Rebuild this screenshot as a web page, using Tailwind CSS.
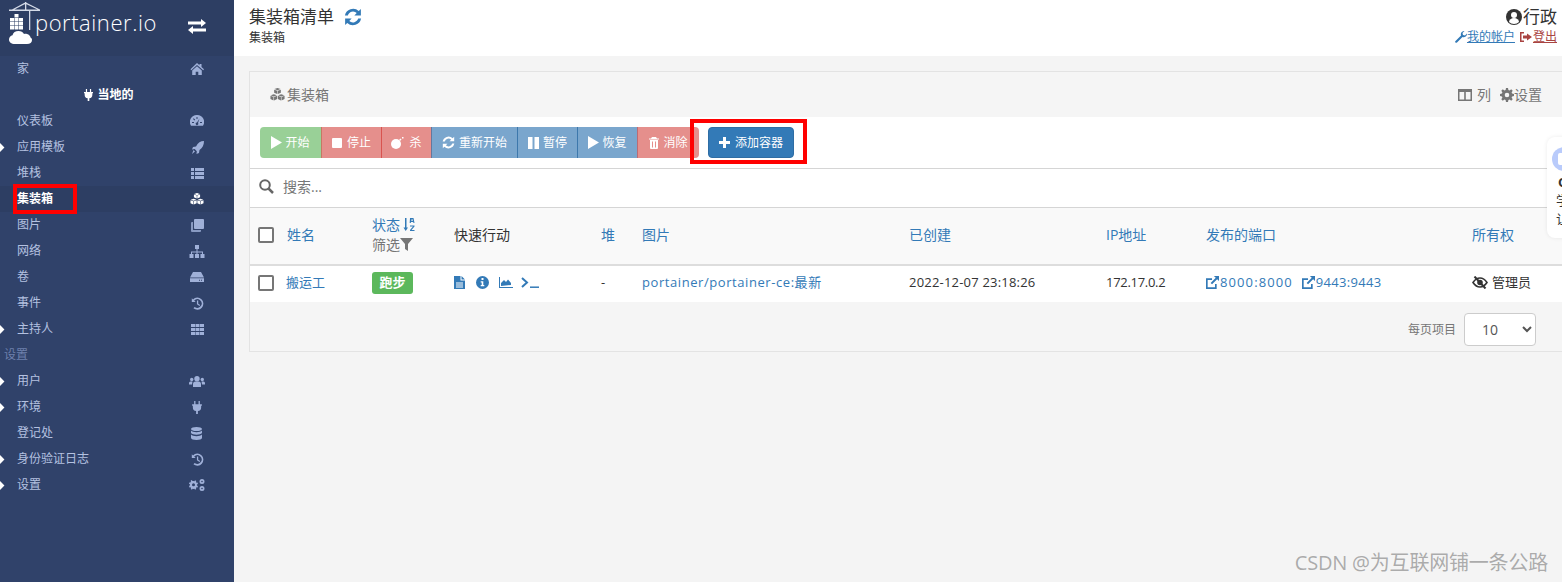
<!DOCTYPE html>
<html lang="zh">
<head>
<meta charset="UTF-8">
<script src="https://cdn.jsdelivr.net/npm/@tailwindcss/browser@4"></script>
<title>portainer.io</title>
</head>
<body class="bg-[#f4f4f4] font-['Open_Sans','Noto_Sans_CJK_SC',sans-serif] text-[13px] text-[#333]">
<svg class="hidden">
  <symbol id="i-cubes" viewBox="0 0 16 14"><path d="M8 0l3.300 1.200L8 2.500 4.700 1.200zM4.400 1.800L7.700 3v3.500L4.400 5.100zM11.600 1.800L8.300 3v3.500L11.600 5.100zM4 6.600l3.300 1.200L4 9.100.7 7.800zM.4 8.400l3.300 1.300v3.700L.4 11.900zM7.600 8.400L4.300 9.700v3.700l3.300-1.500zM12 6.600l3.300 1.200L12 9.100 8.700 7.800zM8.400 8.400l3.300 1.300v3.700l-3.300-1.500zM15.600 8.400l-3.300 1.300v3.700l3.300-1.500z"/></symbol>
  <symbol id="i-refresh" viewBox="0 0 16 16"><path d="M15 .8v5.800H9.200l2.100-2.100A4.800 4.800 0 0 0 3.400 6.700H.8A7.400 7.400 0 0 1 13.100 2.700zM1 15.200V9.400h5.800l-2.100 2.100a4.800 4.800 0 0 0 7.900-2.200h2.600A7.400 7.400 0 0 1 2.900 13.300z"/></symbol>
  <symbol id="i-history" viewBox="0 0 16 16"><path d="M1 1.500v4.700h4.700L3.900 4.400A5.300 5.300 0 1 1 4.500 12.300L3 13.800A7.400 7.400 0 1 0 2.500 3zM7.300 4.300h1.600v3.900l2.400 1.600-.9 1.300-3.100-2.100z"/></symbol>
  <symbol id="i-plug" viewBox="0 0 12 16"><path d="M2.500 0h1.600v4h3.800V0h1.600v4H12v1.700h-.9V8a4.300 4.300 0 0 1-4 4.300V16H4.900v-3.700A4.300 4.300 0 0 1 .9 8V5.700H0V4h2.500z"/></symbol>
  <symbol id="i-play" viewBox="0 0 12 14"><path d="M0 0l12 7-12 7z"/></symbol>
  <symbol id="i-ext" viewBox="0 0 14 14"><path d="M8.500 0H14v5.500l-2-2-5.500 5.500-1.500-1.500L10.500 2zM0 2.500h6.500v1.800H1.800v7.900h7.900V8.500h1.800V14H0z"/></symbol>
</svg>
<div class="flex h-[582px] w-[1562px] overflow-hidden relative">
  <aside class="w-[234px] shrink-0 bg-[#30426a] text-[12px] text-[#b4c1e0]">
    <div class="h-[56px] bg-[#2d3e63] flex items-start relative">
      <svg class="w-[32px] h-[44px] ml-[9px] mt-[2px] shrink-0" viewBox="0 0 32 44" fill="#fff">
        <path d="M0 7.500h31V9H0zM16 0h1.300v8H16zM20 8h1.300v20H20zM17 .5L31 7.500h-2.500L17 2zM16 .5L3 7.500h2.500L16 2z" fill="#d5dbe8"/>
        <path d="M1 16h4v3.500H1zM5.500 16h4v3.500h-4zM10 16h4v3.500h-4zM1 20h4v3.500H1zM5.500 20h4v3.500h-4zM10 20h4v3.500h-4zM1 24h4v3.500H1zM5.500 24h4v3.500h-4zM10 24h4v3.500h-4zM5.500 12h4v3.500h-4z"/>
        <path d="M6 42c-4 0-6-1.800-6-4.500 0-2.300 1.500-3.800 3.500-4.200C4 30.500 6.500 29 9.500 29c2.500 0 4.500 1 5.500 3 1-.4 2-.4 3 0 2 .5 3.500 2 3.500 3.500 1 .6 1.500 1.500 1.500 2.500 0 2.500-2 4-5 4z"/>
      </svg>
      <span class="font-['Open_Sans'] font-light text-[22px] leading-none text-white mt-[11px] -ml-[6px] tracking-[0.55px]">portainer.io</span>
      <svg class="absolute left-[188px] top-[19px] w-[18px] h-[15px]" viewBox="0 0 18 15" fill="#fff"><path d="M0 2.500h13V0l5 4-5 4V5.500H0zM18 9.500H5V7l-5 4 5 4v-2.500h13z"/></svg>
    </div>
    <nav>
      <div class="h-[26px] flex items-center justify-between pl-[17px] pr-[30px]"><span>家</span>
        <svg class="w-[14px] h-[12px]" viewBox="0 0 14 12" fill="#9fb0d8"><path d="M7 0l2.500 2.200V1h2v3l2.500 2.300-.8.900L7 1.900 1.300 7.200l-.8-.9zM7 3.200l4.800 4.300V12H8.300V8.700H5.700V12H2.200V7.500z"/></svg></div>
      <div class="h-[26px] flex items-center justify-center pr-[16px] text-white font-semibold gap-[4px]">
        <svg class="w-[9px] h-[12px]" fill="#fff"><use href="#i-plug"/></svg><span>当地的</span></div>
      <div class="h-[26px] flex items-center justify-between pl-[17px] pr-[30px]"><span>仪表板</span>
        <svg class="w-[14px] h-[13px]" viewBox="0 0 14 13" fill="#9fb0d8"><path d="M7 0a7 7 0 0 1 6 10.800H1A7 7 0 0 1 7 0zM6.500 2v2h1V2zM3 4l1.500 1.500.7-.7L3.700 3.300zM2 7v1h2V7zM10 7v1h2V7zM9.500 3.500L7 7.500a1.300 1.300 0 1 0 1 .5z"/></svg></div>
      <div class="relative h-[26px] flex items-center justify-between pl-[17px] pr-[30px]"><i class="absolute -left-[4px] top-[10px] w-[7px] h-[7px] rotate-45 bg-white"></i><span>应用模板</span>
        <svg class="w-[13px] h-[13px]" viewBox="0 0 13 13" fill="#9fb0d8"><path d="M13 0c0 4-1.500 7-4.500 9l-.5 3-2.500 1 .3-2.800L3.700 8.100 1 8.500 2 6l3-.6C7 1.800 9.500 0 13 0zM2.500 9l1.500 1.500L1 13z"/></svg></div>
      <div class="h-[26px] flex items-center justify-between pl-[17px] pr-[30px]"><span>堆栈</span>
        <svg class="w-[13px] h-[11px]" viewBox="0 0 13 11" fill="#9fb0d8"><path d="M0 0h3v3H0zM4 0h9v3H4zM0 4h3v3H0zM4 4h9v3H4zM0 8h3v3H0zM4 8h9v3H4z"/></svg></div>
      <div class="h-[26px] flex items-center justify-between pl-[17px] pr-[30px] bg-[#2d3e63] text-white font-semibold"><span>集装箱</span>
        <svg class="w-[14px] h-[12px]" fill="#fff"><use href="#i-cubes"/></svg></div>
      <div class="h-[26px] flex items-center justify-between pl-[17px] pr-[30px]"><span>图片</span>
        <svg class="w-[13px] h-[13px]" viewBox="0 0 13 13" fill="#9fb0d8"><path d="M4 0h8a1 1 0 0 1 1 1v8a1 1 0 0 1-1 1H4a1 1 0 0 1-1-1V1a1 1 0 0 1 1-1z"/><path d="M2 3v8h8v1a1 1 0 0 1-1 1H1a1 1 0 0 1-1-1V4a1 1 0 0 1 1-1z" opacity=".8"/></svg></div>
      <div class="h-[26px] flex items-center justify-between pl-[17px] pr-[29px]"><span>网络</span>
        <svg class="w-[16px] h-[13px]" viewBox="0 0 16 13" fill="#9fb0d8"><path d="M6 0h4v4H8.500v2.500H14V9h1.500v4h-4V9H13V7.500H8.500V9H10v4H6V9h1.500V7.500H3V9h1.500v4h-4V9H2V6.500h5.500V4H6z"/></svg></div>
      <div class="h-[26px] flex items-center justify-between pl-[17px] pr-[30px]"><span>卷</span>
        <svg class="w-[14px] h-[10px]" viewBox="0 0 14 10" fill="#9fb0d8"><path d="M3 0h8l3 5.500H0zM0 6.300h14V10H0zM9 7.700v1h1v-1zM11 7.700v1h1v-1z"/></svg></div>
      <div class="h-[26px] flex items-center justify-between pl-[17px] pr-[30px]"><span>事件</span>
        <svg class="w-[13px] h-[13px]" fill="#9fb0d8"><use href="#i-history"/></svg></div>
      <div class="relative h-[26px] flex items-center justify-between pl-[17px] pr-[30px]"><i class="absolute -left-[4px] top-[10px] w-[7px] h-[7px] rotate-45 bg-white"></i><span>主持人</span>
        <svg class="w-[13px] h-[11px]" viewBox="0 0 13 11" fill="#9fb0d8"><path d="M0 0h4v3H0zM4.500 0h4v3h-4zM9 0h4v3H9zM0 4h4v3H0zM4.500 4h4v3h-4zM9 4h4v3H9zM0 8h4v3H0zM4.500 8h4v3h-4zM9 8h4v3H9z"/></svg></div>
      <div class="h-[26px] flex items-center pl-[4px] text-[#6e80ad]">设置</div>
      <div class="relative h-[26px] flex items-center justify-between pl-[17px] pr-[29px]"><i class="absolute -left-[4px] top-[10px] w-[7px] h-[7px] rotate-45 bg-white"></i><span>用户</span>
        <svg class="w-[16px] h-[11px]" viewBox="0 0 16 11" fill="#9fb0d8"><circle cx="8" cy="2.700" r="2.700"/><circle cx="2.700" cy="3.500" r="1.700"/><circle cx="13.300" cy="3.500" r="1.700"/><path d="M4 11V8a2.500 2.500 0 0 1 2.500-2.500h3A2.500 2.500 0 0 1 12 8v3zM0 8.500V7a1.500 1.500 0 0 1 1.500-1.500H3.500L3 8.500zM16 8.500V7a1.500 1.500 0 0 0-1.500-1.500H12.500L13 8.500z"/></svg></div>
      <div class="relative h-[26px] flex items-center justify-between pl-[17px] pr-[32px]"><i class="absolute -left-[4px] top-[10px] w-[7px] h-[7px] rotate-45 bg-white"></i><span>环境</span>
        <svg class="w-[10px] h-[13px]" fill="#9fb0d8"><use href="#i-plug"/></svg></div>
      <div class="h-[26px] flex items-center justify-between pl-[17px] pr-[32px]"><span>登记处</span>
        <svg class="w-[11px] h-[13px]" viewBox="0 0 11 13" fill="#9fb0d8"><ellipse cx="5.500" cy="2" rx="5.500" ry="2"/><path d="M0 3.500c1 1.300 3 1.700 5.500 1.700S10 4.800 11 3.500V6c-1 1.300-3 1.700-5.500 1.700S1 7.300 0 6zM0 7.500c1 1.300 3 1.700 5.500 1.700S10 8.800 11 7.500V11c0 1.200-2.500 2-5.500 2S0 12.200 0 11z"/></svg></div>
      <div class="relative h-[26px] flex items-center justify-between pl-[17px] pr-[30px]"><i class="absolute -left-[4px] top-[10px] w-[7px] h-[7px] rotate-45 bg-white"></i><span>身份验证日志</span>
        <svg class="w-[13px] h-[13px]" fill="#9fb0d8"><use href="#i-history"/></svg></div>
      <div class="relative h-[26px] flex items-center justify-between pl-[17px] pr-[29px]"><i class="absolute -left-[4px] top-[10px] w-[7px] h-[7px] rotate-45 bg-white"></i><span>设置</span>
        <svg class="w-[16px] h-[12px]" viewBox="0 0 16 12" fill="#9fb0d8"><path fill-rule="evenodd" d="M4.500 2l1 .2.500-1 1.300.8-.4 1 .7.800 1-.2.300 1.500-1 .3v1.200l1 .3-.3 1.500-1-.2-.7.800.4 1-1.300.8-.5-1-1 .2-1-.2-.5 1-1.300-.8.400-1-.7-.800-1 .2L0 6.700l1-.3V5.200L0 4.900l.3-1.500 1 .2.700-.8-.4-1L2.900 1l.5 1zM4.500 4.300a1.500 1.500 0 1 0 0 3 1.500 1.500 0 0 0 0-3z"/><path fill-rule="evenodd" d="M13 0a2.500 2.500 0 1 1 0 5 2.500 2.500 0 0 1 0-5zM13 1.700a.8.800 0 1 0 0 1.600.8.800 0 0 0 0-1.600zM13 7a2.500 2.500 0 1 1 0 5 2.500 2.500 0 0 1 0-5zM13 8.700a.8.800 0 1 0 0 1.600.8.800 0 0 0 0-1.600z"/></svg></div>
    </nav>
  </aside>

  <main class="flex-1 min-w-0">
    <header class="h-[56px] bg-white pl-[15px] pr-[5px] flex justify-between">
      <div>
        <div class="flex items-center h-[23px] mt-[5px] text-[17px] text-[#333]">集装箱清单
          <svg class="w-[18px] h-[18px] ml-[10px]" fill="#337ab7"><use href="#i-refresh"/></svg></div>
        <div class="text-[12px] leading-[14px] mt-[3px]">集装箱</div>
      </div>
      <div class="flex flex-col items-end">
        <div class="flex items-center h-[23px] mt-[5px] text-[17px] text-[#333]">
          <svg class="w-[16px] h-[16px] mr-px" viewBox="0 0 16 16"><circle cx="8" cy="8" r="8" fill="#333"/><circle cx="8" cy="6" r="3" fill="#fff"/><path d="M3 13a5 4 0 0 1 10 0 7 7 0 0 1-10 0z" fill="#fff"/></svg>行政</div>
        <div class="flex items-center text-[12px] leading-[14px] mt-[2px]">
          <svg class="w-[12px] h-[12px]" viewBox="0 0 12 12" fill="#337ab7"><path d="M12 2.500A3.400 3.400 0 0 1 7.500 6L2 11.500a1 1 0 0 1-1.500-1.500L6 4.500A3.400 3.400 0 0 1 9.500 0L7.500 2l.5 2 2 .5z"/></svg>
          <a class="text-[#337ab7] underline">我的帐户</a>
          <svg class="w-[12px] h-[10px] ml-[5px] mr-px" viewBox="0 0 12 10" fill="#a94442"><path d="M4 0v1.500H1.500v7H4V10H0V0zM7 1.500L12 5 7 8.500V6.500H3v-3h4z"/></svg>
          <a class="text-[#a94442] underline">登出</a>
        </div>
      </div>
    </header>

    <section class="mt-[15px] ml-[15px] h-[281px] bg-white border border-[#e3e3e3] border-r-0">
      <div class="h-[45px] bg-[#f5f5f5] flex items-center justify-between pl-[20px] pr-[20px] text-[14px] text-[#767676]">
        <div class="flex items-center gap-[2px]"><svg class="w-[15px] h-[13px]" fill="#767676"><use href="#i-cubes"/></svg>集装箱</div>
        <div class="flex items-center">
          <svg class="w-[14px] h-[12px] mr-[5px]" viewBox="0 0 14 12" fill="#767676"><path fill-rule="evenodd" d="M0 0h14v12H0zM1.500 3v7.500h4.700V3zM7.800 3v7.500h4.700V3z"/></svg>列
          <svg class="w-[14px] h-[14px] ml-[9px]" viewBox="0 0 14 14" fill="#767676"><path fill-rule="evenodd" d="M6 0h2l.4 1.900 1.200.5L11.200 1.300l1.500 1.500-1.100 1.600.5 1.200L14 6v2l-1.900.4-.5 1.200 1.100 1.600-1.500 1.500-1.600-1.100-1.200.5L8 14H6l-.4-1.900-1.200-.5-1.600 1.100-1.500-1.500 1.100-1.600-.5-1.200L0 8V6l1.900-.4.500-1.200-1.100-1.600 1.500-1.500 1.600 1.100 1.200-.5zM7 4.700a2.300 2.300 0 1 0 0 4.600 2.300 2.300 0 0 0 0-4.600z"/></svg>设置
        </div>
      </div>
      <div class="h-[52px] flex items-start pt-[10px] pl-[10px] border-b border-[#d5d5d5] text-[12px] text-white">
        <div class="flex h-[31px]">
          <span class="w-[62px] rounded-l bg-[#99d097] border-r border-[#d9534f]/70 flex items-center justify-center gap-[3px]"><svg class="w-[11px] h-[13px]" fill="#fff"><use href="#i-play"/></svg>开始</span>
          <span class="w-[60px] bg-[#e58f8c] border-r border-[#d9534f] flex items-center justify-center gap-[5px]"><i class="block w-[10px] h-[10px] bg-white rounded-[1px]"></i>停止</span>
          <span class="w-[50px] bg-[#e58f8c] border-r border-[#2e6da4]/70 flex items-center justify-center gap-[5px]"><svg class="w-[13px] h-[12px]" viewBox="0 0 13 12" fill="#fff"><circle cx="5" cy="7" r="5"/><path d="M8 3l1.500-1.500 1 1L9 4zM11 0h1.500v1.500H11z"/></svg>杀</span>
          <span class="w-[86px] bg-[#7aa6cd] border-r border-[#2e6da4]/80 flex items-center justify-center gap-[4px]"><svg class="w-[13px] h-[13px]" fill="#fff"><use href="#i-refresh"/></svg>重新开始</span>
          <span class="w-[60px] bg-[#7aa6cd] border-r border-[#2e6da4]/80 flex items-center justify-center gap-[4px]"><svg class="w-[11px] h-[12px]" viewBox="0 0 11 12" fill="#fff"><path d="M0 0h4.500v12H0zM6.500 0H11v12H6.500z"/></svg>暂停</span>
          <span class="w-[60px] bg-[#7aa6cd] border-r border-[#d9534f]/70 flex items-center justify-center gap-[3px]"><svg class="w-[11px] h-[13px]" fill="#fff"><use href="#i-play"/></svg>恢复</span>
          <span class="w-[61px] rounded-r bg-[#e58f8c] flex items-center justify-center gap-[4px]"><svg class="w-[10px] h-[12px]" viewBox="0 0 10 12" fill="#fff"><path fill-rule="evenodd" d="M3 0h4l1 1.500h2v1H0v-1h2zM1 3h8v8a1 1 0 0 1-1 1H2a1 1 0 0 1-1-1zM3 4.500V10.500h1V4.500zM6 4.500V10.500h1V4.500z"/></svg>消除</span>
        </div>
        <button class="ml-[9px] w-[86px] h-[31px] rounded bg-[#337ab7] border border-[#2e6da4] text-white flex items-center justify-center gap-[5px]">
          <svg class="w-[11px] h-[11px]" viewBox="0 0 11 11" fill="#fff"><path d="M4 0h3v4h4v3H7v4H4V7H0V4h4z"/></svg>添加容器</button>
      </div>
      <div class="h-[39px] flex items-center pl-[9px] pb-[3px] border-b border-[#d5d5d5] text-[14px] text-[#767676]">
        <svg class="w-[15px] h-[15px]" viewBox="0 0 15 15" fill="none" stroke="#666" stroke-width="2"><circle cx="6" cy="6" r="4.800"/><path d="M9.500 9.500l4.500 4.500" stroke-width="2.500"/></svg>
        <span class="ml-[9px]">搜索...</span>
      </div>
      <div class="h-[58px] bg-[#f9f9f9] border-b-2 border-[#ddd] grid grid-cols-[38px_85px_82px_147px_41px_267px_197px_100px_266px_1fr] items-center pl-[8px] pb-[3px] text-[14px] text-[#337ab7]">
        <i class="block w-[16px] h-[16px] rounded-[2px] border-2 border-[#767676] bg-white"></i>
        <span class="-ml-[9px]">姓名</span>
        <div class="-ml-[9px] leading-[20px]">
          <div class="flex items-center gap-[3px]">状态
            <svg class="w-[12px] h-[13px]" viewBox="0 0 12 13" fill="#337ab7"><path d="M2 0h1.500v9.500H5L2.700 13 .5 9.500H2zM7 0h3.500l1 5h-1l-.3-1H8l-.3 1h-1zM8.300 3h1.500l-.5-2h-.5zM7 7.500h4.500v1L8.500 12h3v1H7v-1l3-3.500H7z"/></svg></div>
          <div class="flex items-center text-[#767676]">筛选<svg class="w-[13px] h-[13px]" viewBox="0 0 13 13" fill="#767676"><path d="M0 0h13L8 6v7L5 11V6z"/></svg></div>
        </div>
        <span class="-ml-[9px] text-[#333]">快速行动</span>
        <span class="-ml-[9px]">堆</span>
        <span class="-ml-[9px]">图片</span>
        <span class="-ml-[9px]">已创建</span>
        <span class="-ml-[9px]">IP地址</span>
        <span class="-ml-[9px]">发布的端口</span>
        <span class="-ml-[9px]">所有权</span>
      </div>
      <div class="h-[36px] grid grid-cols-[38px_85px_82px_147px_41px_267px_197px_100px_266px_1fr] items-center pl-[8px] pb-[3px] text-[13px]">
        <i class="block w-[16px] h-[16px] rounded-[2px] border-2 border-[#767676] bg-white"></i>
        <a class="-ml-[10px] text-[#337ab7]">搬运工</a>
        <span class="-ml-[9px] w-[41px] h-[22px] rounded-[3px] bg-[#5cb85c] text-white text-[13px] font-bold flex items-center justify-center">跑步</span>
        <div class="-ml-[9px] flex items-center">
          <svg class="w-[11px] h-[13px]" viewBox="0 0 11 13" fill="#337ab7"><path fill-rule="evenodd" d="M0 0h6.500v4.500H11V13H0zM2 6.500v1h7v-1zM2 8.500v1h7v-1zM2 10.500v1h7v-1zM7.500 0L11 3.500H7.500z"/></svg>
          <svg class="w-[13px] h-[13px] ml-[11px]" viewBox="0 0 13 13" fill="#337ab7"><path fill-rule="evenodd" d="M6.500 0a6.500 6.500 0 1 1 0 13 6.500 6.500 0 0 1 0-13zM5.500 2v2h2V2zM4.700 5.200v1.300h1V9h-1v1.300h3.600V9h-1V5.200z"/></svg>
          <svg class="w-[14px] h-[11px] ml-[10px]" viewBox="0 0 14 11" fill="#337ab7"><path d="M0 0h1v10h13v1H0zM2 9V6l3-3 2 2 2-2.500 3 3.500v2z"/></svg>
          <svg class="w-[18px] h-[11px] ml-[8px]" viewBox="0 0 18 11" fill="none" stroke="#337ab7" stroke-width="2"><path d="M1 1l5 4.500L1 10"/><path d="M9 10.200h9" stroke-width="1.500"/></svg>
        </div>
        <span class="-ml-[9px]">-</span>
        <a class="-ml-[9px] text-[#337ab7] tracking-[0.57px]">portainer/portainer-ce:最新</a>
        <span class="-ml-[9px] tracking-[0.2px]">2022-12-07 23:18:26</span>
        <span class="-ml-[9px] tracking-[-0.3px]">172.17.0.2</span>
        <div class="-ml-[9px] flex items-center text-[#337ab7]">
          <svg class="w-[13px] h-[13px] mr-px" fill="#337ab7"><use href="#i-ext"/></svg><span class="tracking-[1.1px]">8000:8000</span>
          <svg class="w-[13px] h-[13px] ml-[9px] mr-px" fill="#337ab7"><use href="#i-ext"/></svg><span class="tracking-[0.3px]">9443:9443</span>
        </div>
        <div class="-ml-[9px] flex items-center gap-[4px]">
          <svg class="w-[16px] h-[13px]" viewBox="0 0 16 13" fill="none" stroke="#333" stroke-width="1.600"><path d="M1 6.500C3 3.500 5.500 2 8 2s5 1.500 7 4.500c-2 3-4.500 4.500-7 4.500S3 9.500 1 6.500z"/><circle cx="8" cy="6.500" r="2" fill="#333"/><path d="M2.500 .5l11 12" stroke-width="2"/></svg>管理员</div>
      </div>
      <div class="h-[49px] bg-[#f5f5f5] flex items-center justify-end pt-[6px] pr-[26px] text-[12px] text-[#767676]">
        <span class="mr-[8px]">每页项目</span>
        <div class="w-[72px] h-[33px] rounded border border-[#ccc] bg-white flex items-center justify-between pl-[17px] pr-[3px] text-[14px] text-[#555]">10
          <svg class="w-[10px] h-[7px]" viewBox="0 0 10 7" fill="none" stroke="#555" stroke-width="2"><path d="M1 1l4 4 4-4"/></svg></div>
      </div>
    </section>
  </main>

  <!-- red annotation boxes -->
  <div class="absolute left-[13px] top-[184px] w-[64px] h-[30px] border-[4px] border-[#f00]"></div>
  <div class="absolute left-[690px] top-[119px] w-[117px] h-[45px] border-[4px] border-[#f00]"></div>

  <!-- floating widget cut by the edge -->
  <div class="absolute left-[1547px] top-[137px] w-[40px] h-[101px] rounded-[8px] bg-white shadow-[0_0_4px_rgba(0,0,0,0.08)] overflow-hidden text-[13px] text-[#333]">
    <div class="mt-[10px] ml-[5px] w-[24px] h-[24px] rounded-full bg-[#b9cbfb] flex items-center justify-center"><i class="block w-[12px] h-[12px] bg-white rounded-[2px]"></i></div>
    <div class="ml-[11px] mt-[3px] font-bold leading-[17px]">Q</div>
    <div class="ml-[9px] leading-[19px]">学</div>
    <div class="ml-[9px] leading-[19px]">让</div>
  </div>

  <div class="absolute right-[14px] top-[551px] text-[20px] leading-[24px] tracking-[-0.2px] text-[#8a8a8a]/70">CSDN @为互联网铺一条公路</div>
</div>
</body>
</html>
